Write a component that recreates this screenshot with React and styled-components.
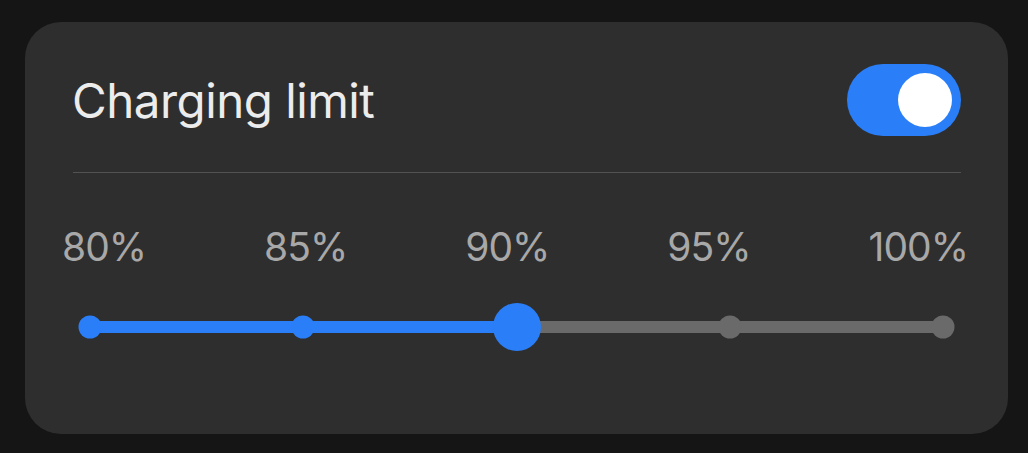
import React, { useState } from "react";
import styled, { createGlobalStyle } from "styled-components";

const Global = createGlobalStyle`
  html, body {
    margin: 0;
    padding: 0;
    background: #151515;
  }
  body {
    font-family: Inter, "Noto Sans", sans-serif;
  }
`;

const stops = [80, 85, 90, 95, 100];

export default function App() {
  const [on, setOn] = useState(true);
  const [value, setValue] = useState(90);
  const index = stops.indexOf(value);
  const fill = (index / (stops.length - 1)) * 100;

  return (
    <>
      <Global />
      <Page>
        <Card>
          <Header>
            <Title>Charging limit</Title>
            <Toggle $on={on} onClick={() => setOn(!on)}>
              <Knob $on={on} />
            </Toggle>
          </Header>
          <Hr />
          <Labels>
            {stops.map((s) => (
              <Label key={s}>{s}%</Label>
            ))}
          </Labels>
          <Slider>
            <Track>
              <Fill style={{ width: `${fill}%` }} />
              {stops.map((s, i) => (
                <Stop
                  key={s}
                  $active={i <= index}
                  $current={i === index}
                  style={{ left: `${(i / (stops.length - 1)) * 100}%` }}
                  onClick={() => setValue(s)}
                />
              ))}
            </Track>
          </Slider>
        </Card>
      </Page>
    </>
  );
}

const Page = styled.div`
  padding: 22px 20px 19px 25px;
`;

const Card = styled.div`
  width: 983px;
  box-sizing: border-box;
  background: #2e2e2e;
  border-radius: 36px;
  padding: 42px 47px 83px 48px;
`;

const Header = styled.div`
  display: flex;
  align-items: center;
  justify-content: space-between;
  height: 72px;
`;

const Title = styled.h1`
  margin: 0 0 0 -1px;
  font-size: 47.5px;
  font-weight: 400;
  color: #ececec;
  letter-spacing: -0.5px;
`;

const Toggle = styled.button`
  width: 114px;
  height: 72px;
  border: none;
  border-radius: 36px;
  padding: 0 9px;
  display: flex;
  align-items: center;
  justify-content: ${({ $on }) => ($on ? "flex-end" : "flex-start")};
  background: ${({ $on }) => ($on ? "#2a7ff8" : "#5a5a5a")};
  cursor: pointer;
`;

const Knob = styled.span`
  width: 54px;
  height: 54px;
  border-radius: 50%;
  background: #ffffff;
`;

const Hr = styled.div`
  height: 1px;
  background: #525252;
  margin: 36px 0 0;
`;

const Labels = styled.div`
  display: flex;
  justify-content: space-between;
  margin: 50px -7px 0 -11px;
`;

const Label = styled.span`
  font-size: 39px;
  line-height: 48px;
  color: #a8a8a8;
  letter-spacing: -1px;
`;

const Slider = styled.div`
  height: 48px;
  margin: 32px 18px 0 17px;
  display: flex;
  align-items: center;
`;

const Track = styled.div`
  position: relative;
  flex: 1;
  height: 12px;
  border-radius: 6px;
  background: #6a6a6a;
`;

const Fill = styled.div`
  height: 100%;
  border-radius: 6px;
  background: #2a7ff8;
`;

const Stop = styled.span`
  position: absolute;
  top: 50%;
  width: ${({ $current }) => ($current ? "48px" : "23px")};
  height: ${({ $current }) => ($current ? "48px" : "23px")};
  border-radius: 50%;
  transform: translate(-50%, -50%);
  background: ${({ $active }) => ($active ? "#2a7ff8" : "#6a6a6a")};
  cursor: pointer;
`;
